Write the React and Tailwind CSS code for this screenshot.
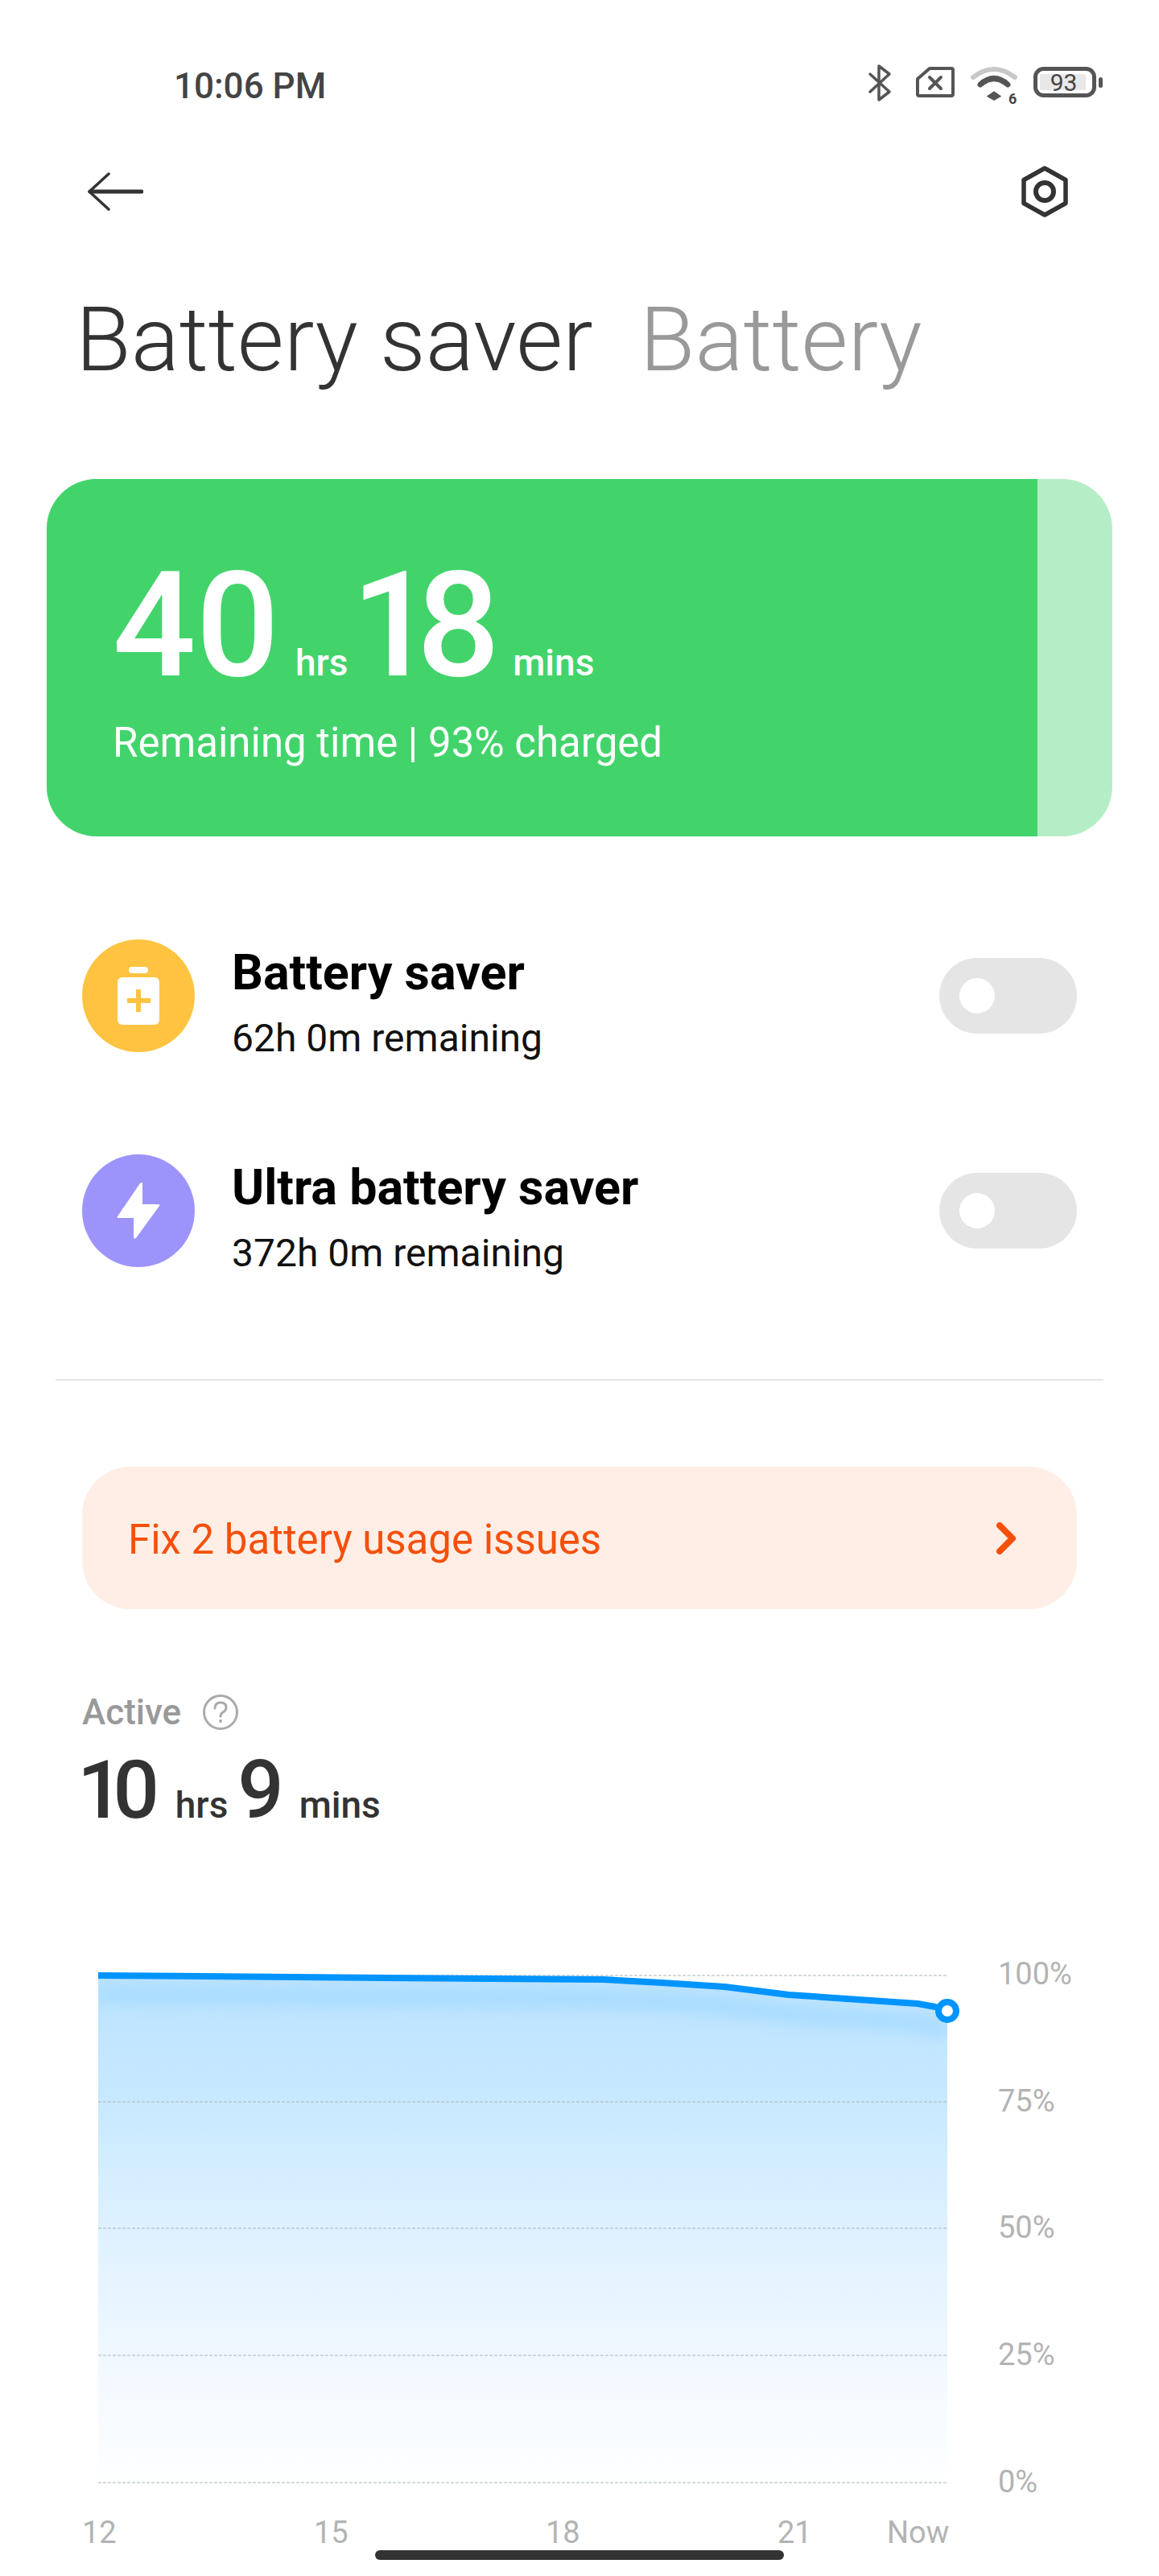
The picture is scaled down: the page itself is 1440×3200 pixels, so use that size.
import React from 'react';

const font = { fontFamily: 'Roboto, sans-serif' };

function StatusIcons() {
  return (
    <svg width="300" height="54" viewBox="0 0 300 54" className="block">
      {/* bluetooth */}
      <path d="M11 16 L35 38 L22 48 V6 L35 16 L11 38" fill="none" stroke="#555" strokeWidth="3.5" strokeLinecap="round" strokeLinejoin="round" />
      {/* sim */}
      <path d="M70 22 L85 9 H112 Q114 9 114 11 V41 Q114 43 112 43 H72 Q70 43 70 41 Z" fill="none" stroke="#555" strokeWidth="4" strokeLinejoin="round" />
      <path d="M85 20 L99 34 M99 20 L85 34" stroke="#555" strokeWidth="4" strokeLinecap="round" />
      {/* wifi */}
      <path d="M139 20 Q165 0 191 20" fill="none" stroke="#c8c8c8" strokeWidth="6" strokeLinecap="round" />
      <path d="M148 29 Q165 14 182 29" fill="none" stroke="#555" strokeWidth="7" strokeLinecap="round" />
      <path d="M165 38 L173 43.5 L165 48 L157 43.5 Z" fill="#555" stroke="#555" strokeWidth="1.5" strokeLinejoin="round" />
      {/* battery */}
      <rect x="216.5" y="9.5" width="73" height="33" rx="10" fill="none" stroke="#555" strokeWidth="5" />
      <rect x="222" y="16" width="57" height="20" rx="2" fill="#e8e8e8" />
      <rect x="295" y="20" width="5" height="13" rx="2.5" fill="#555" />
    </svg>
  );
}

function GearIcon() {
  return (
    <svg width="60" height="64" viewBox="0 0 60 64" className="block">
      <path d="M30 3 L56 17.5 V46.5 L30 61 L4 46.5 V17.5 Z" fill="none" stroke="#333" strokeWidth="5.5" strokeLinejoin="round" />
      <circle cx="30" cy="32" r="11" fill="none" stroke="#333" strokeWidth="6" />
    </svg>
  );
}

function BackIcon() {
  return (
    <svg width="70" height="48" viewBox="0 0 70 48" className="block">
      <path d="M68 24 H4" stroke="#333" strokeWidth="5" strokeLinecap="round" />
      <path d="M27 2 L3 24 L27 46" fill="none" stroke="#333" strokeWidth="3.5" strokeLinecap="round" strokeLinejoin="round" />
    </svg>
  );
}

function BatteryPlusIcon() {
  return (
    <svg width="52" height="72" viewBox="0 0 52 72" className="block">
      <rect x="14" y="0" width="24" height="8" rx="4" fill="#fff" />
      <rect x="0" y="13" width="52" height="59" rx="6" fill="#fff" />
      <path d="M26 28 V56 M12 42 H41" stroke="#fec340" strokeWidth="6" />
    </svg>
  );
}

function BoltIcon() {
  return (
    <svg width="54" height="72" viewBox="0 0 54 72" className="block">
      <path d="M31 1 Q32 0 32 3 V28 H52 Q54 28 53 30 L24 70 Q22 72 21 69 V45 H2 Q0 45 1 43 L29 2 Z" fill="#fff" />
    </svg>
  );
}

function Toggle() {
  return (
    <div className="flex h-[94px] w-[171px] items-center rounded-[47px] bg-[#e5e5e5] pl-[25px]">
      <div className="h-[44px] w-[44px] rounded-full bg-white" />
    </div>
  );
}

function SaverRow({ color, icon, title, sub }) {
  return (
    <div className="flex h-[140px] items-center">
      <div className="flex h-[140px] w-[140px] items-center justify-center rounded-full" style={{ backgroundColor: color }}>
        {icon}
      </div>
      <div className="ml-[46px] flex-1 self-start pt-[6px]">
        <div className="text-[61px] font-bold leading-[70px] text-black">{title}</div>
        <div className="mt-[16px] text-[48px] leading-[62px] text-[#111]">{sub}</div>
      </div>
      <Toggle />
    </div>
  );
}

function Chart() {
  const top = [[0, 1], [300, 3.5], [627, 6], [700, 10], [778, 15], [858, 25], [1018, 36], [1040, 40], [1055, 45]];
  const d = top.map(([x, y], i) => `${i === 0 ? 'M' : 'L'}${x} ${y}`).join(' ');
  const shade = top.map(([x, y], i) => `${i === 0 ? 'M' : 'L'}${x} ${y + 24}`).join(' ');
  return (
    <svg width="1075" height="660" viewBox="0 0 1075 660" className="block overflow-visible">
      <defs>
        <linearGradient id="area" x1="0" y1="0" x2="0" y2="1">
          <stop offset="0" stopColor="#bbe3ff" />
          <stop offset="0.25" stopColor="#c8e9ff" />
          <stop offset="0.5" stopColor="#def1ff" />
          <stop offset="0.75" stopColor="#f0f8ff" />
          <stop offset="1" stopColor="#feffff" />
        </linearGradient>
        <clipPath id="areaClip">
          <path d={`${d} L1055 631 L0 631 Z`} />
        </clipPath>
        <filter id="soft" x="-5%" y="-100%" width="110%" height="300%">
          <feGaussianBlur stdDeviation="8" />
        </filter>
      </defs>
      <path d={`${d} L1055 631 L0 631 Z`} fill="url(#area)" />
      <g clipPath="url(#areaClip)">
        <path d={shade} fill="none" stroke="#a5daff" strokeWidth="24" opacity="0.75" filter="url(#soft)" />
      </g>
      {[1, 158, 315, 473, 631].map((y) => (
        <line key={y} x1="0" x2="1055" y1={y} y2={y} stroke="#a8b4bc" strokeWidth="1" strokeDasharray="4 2" />
      ))}
      <path d={d} fill="none" stroke="#0094ff" strokeWidth="8" strokeLinejoin="round" />
      <circle cx="1055" cy="45" r="11" fill="#fff" stroke="#0094ff" strokeWidth="8" />
    </svg>
  );
}

export default function App() {
  return (
    <div className="relative h-[3200px] w-[1440px] overflow-hidden bg-white" style={font}>
      {/* status bar */}
      <div className="flex items-start justify-between pl-[216px] pr-[70px] pt-[76px]">
        <span className="pt-[4px] text-[44px] font-medium leading-[54px] text-[#444]">10:06 PM</span>
        <div className="relative">
          <StatusIcons />
          <span className="absolute left-[183px] top-[38px] text-[18px] font-bold leading-[18px] text-[#444]">6</span>
          <span className="absolute left-[223px] top-[10px] w-[57px] text-center text-[30px] leading-[34px] text-[#444]">93</span>
        </div>
      </div>

      {/* nav */}
      <div className="mt-[72px] flex items-center justify-between pl-[108px] pr-[112px]">
        <BackIcon />
        <GearIcon />
      </div>

      {/* tabs */}
      <div className="mt-[86px] flex gap-[58px] pl-[94px] text-[112px] font-light leading-[132px]">
        <span className="text-[#333]">Battery saver</span>
        <span className="text-[#999]">Battery</span>
      </div>

      {/* remaining card */}
      <div className="mx-[58px] mt-[107px] flex h-[444px] overflow-hidden rounded-[62px] bg-[#b5eec6]">
        <div className="flex-1 bg-[#42d46b] pl-[82px] pt-[92px] text-white">
          <div className="flex items-baseline font-medium leading-[180px]">
            <span className="text-[182px]">40</span>
            <span className="ml-[20px] text-[46px]">hrs</span>
            <span className="ml-[4px] text-[182px] tracking-[-22px]">18</span>
            <span className="ml-[38px] text-[46px]">mins</span>
          </div>
          <div className="mt-[-22px] text-[51px] leading-[64px]">Remaining time | 93% charged</div>
        </div>
        <div className="w-[93px]" />
      </div>

      {/* saver modes */}
      <div className="mt-[128px] flex flex-col gap-[127px] px-[102px]">
        <SaverRow color="#fec340" icon={<BatteryPlusIcon />} title="Battery saver" sub="62h 0m remaining" />
        <SaverRow color="#9d94fb" icon={<BoltIcon />} title="Ultra battery saver" sub="372h 0m remaining" />
      </div>

      <div className="mx-[69px] mt-[139px] h-[2px] bg-[#e5e5e5]" />

      {/* issues banner */}
      <div className="mx-[102px] mt-[107px] flex h-[177px] items-center justify-between rounded-[60px] bg-[#ffeee6] pl-[57px] pr-[72px]">
        <span className="pt-[4px] text-[51px] leading-[60px] text-[#f4500c]">Fix 2 battery usage issues</span>
        <svg width="30" height="40" viewBox="0 0 30 40" className="block">
          <path d="M6 4 L22 20 L6 36" fill="none" stroke="#f4500c" strokeWidth="8" strokeLinecap="round" strokeLinejoin="round" />
        </svg>
      </div>

      {/* active time */}
      <div className="ml-[102px] mt-[100px]">
        <div className="flex items-center">
          <span className="text-[44px] font-medium leading-[56px] text-[#999]">Active</span>
          <svg width="46" height="46" viewBox="0 0 46 46" className="ml-[26px] block">
            <circle cx="23" cy="23" r="20.5" fill="none" stroke="#aaa" strokeWidth="3" />
            <path d="M16 18 Q16 11 23 11 Q30 11 30 17 Q30 21 26 23 Q23 25 23 28" fill="none" stroke="#aaa" strokeWidth="3" strokeLinecap="round" />
            <circle cx="23" cy="34" r="2" fill="#aaa" />
          </svg>
        </div>
        <div className="mt-[14px] flex items-baseline font-medium leading-[110px] text-[#333]">
          <span className="ml-[-6px] text-[101px] tracking-[-13px]">10</span>
          <span className="ml-[33px] text-[46px]">hrs</span>
          <span className="ml-[12px] text-[101px]">9</span>
          <span className="ml-[19px] text-[46px]">mins</span>
        </div>
      </div>

      {/* chart */}
      <div className="ml-[122px] mt-[156px] flex">
        <Chart />
        <div className="ml-[43px] flex h-[660px] flex-col text-[38px] leading-[50px] text-[#b3b3b3]">
          <span className="mt-[-26px]">100%</span>
          <span className="mt-[108px]">75%</span>
          <span className="mt-[107px]">50%</span>
          <span className="mt-[108px]">25%</span>
          <span className="mt-[108px]">0%</span>
        </div>
      </div>

      {/* x axis */}
      <div className="ml-[102px] mt-[8px] flex text-[38px] leading-[50px] text-[#b3b3b3]">
        <span className="w-[288px]">12</span>
        <span className="w-[288px]">15</span>
        <span className="w-[288px]">18</span>
        <span className="w-[136px]">21</span>
        <span>Now</span>
      </div>

      {/* home indicator */}
      <div className="absolute bottom-[20px] left-[466px] h-[12px] w-[508px] rounded-[6px] bg-[#333]" />
    </div>
  );
}
